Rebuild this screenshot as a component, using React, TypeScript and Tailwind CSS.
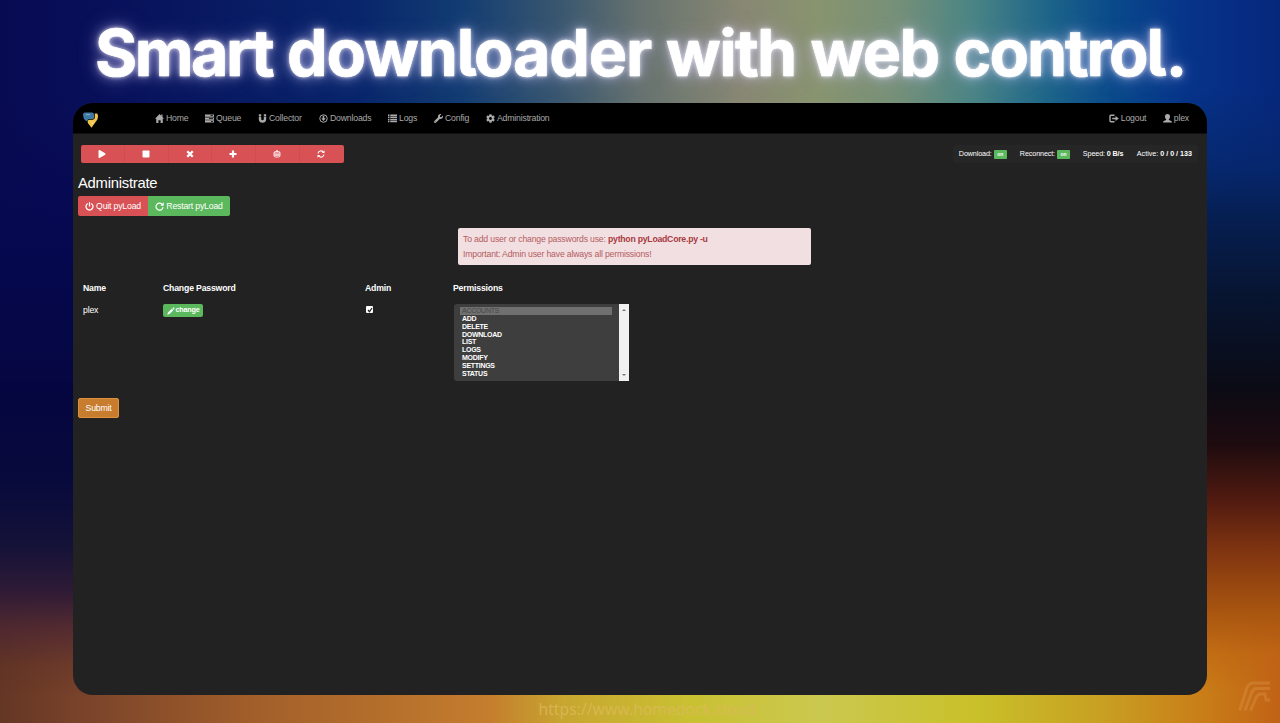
import React from "react";
import { FaWrench, FaCog, FaPlay, FaStop } from "react-icons/fa";

type Kids = { children?: React.ReactNode };

const Logo = () => (
  <svg width="15" height="16" viewBox="0 0 15 16">
    <path d="M0 2.500Q0 .600 2 .500h7q2 .100 2 2v3Q11 7 9.500 7H6Q4.500 7.300 4.300 9.500Q.500 8 .200 4z" fill="#3f7aa5" />
    <path d="M11.800 1.500H14q1 .500 1 3l-.600 3L8.500 15.700 4.800 11q-.600-3 1.700-3.200h3.200q2.100-.200 2.100-2.300z" fill="#f1c54b" />
    <path d="M3 2.600h4" stroke="#a9c2d3" strokeWidth=".700" />
    <circle cx="9.500" cy="11" r=".700" fill="#fff1c0" />
  </svg>
);
const HomeIcon = () => (
  <svg width="9" height="9" viewBox="0 0 18 18" fill="currentColor">
    <path d="M9 0l3.500 3.500V1H15v5l3 3.500h-2.500V18h-4.300v-5.500H6.800V18H2.500V9.500H0z" />
  </svg>
);
const QueueIcon = () => (
  <svg width="9" height="9" viewBox="0 0 18 18" fill="currentColor">
    <path fillRule="evenodd" d="M0 1h18v4.500H0zM11 2.500v1.500h5V2.500zM0 6.800h18v4.500H0zM8 8.300v1.500h8V8.300zM0 12.600h18V17H0zM12 14v1.500h4V14z" />
  </svg>
);
const MagnetIcon = () => (
  <svg width="9" height="9" viewBox="0 0 18 18" fill="none" stroke="currentColor" strokeWidth="4.800">
    <path d="M4 5.500V10a5 5 0 0 0 10 0V5.500M4 .500v4M14 .500v4" />
  </svg>
);
const ListIcon = () => (
  <svg width="9" height="9" viewBox="0 0 18 18" fill="currentColor">
    <path d="M0 1h3v3H0zM4.500 1H18v3H4.500zM0 5.200h3v3H0zM4.500 5.200H18v3H4.500zM0 9.400h3v3H0zM4.500 9.400H18v3H4.500zM0 13.600h3v3H0zM4.500 13.600H18v3H4.500z" />
  </svg>
);
const LogoutIcon = () => (
  <svg width="10" height="9" viewBox="0 0 20 18" fill="none" stroke="currentColor" strokeWidth="2.600">
    <path d="M11 2.500H4q-2 0-2 2v9q0 2 2 2h7M6.500 9h8" strokeWidth="2.800" /><path d="M13 4l6.500 5-6.500 5z" fill="currentColor" stroke="none" />
  </svg>
);
const UserIcon = () => (
  <svg width="9" height="9" viewBox="0 0 18 18" fill="currentColor">
    <path d="M9 0c3.500 0 5 2 5 5 0 2.500-1 4.500-2.300 5.700v1.500l4.800 2q1.500.700 1.500 2.800H0q0-2.100 1.500-2.800l4.800-2v-1.500C5 9.500 4 7.500 4 5c0-3 1.500-5 5-5z" />
  </svg>
);
const DownloadIcon = () => (
  <svg width="9" height="9" viewBox="0 0 18 18" fill="none" stroke="currentColor" strokeWidth="2">
    <circle cx="9" cy="9" r="7.500" /><path d="M9 3.500V10" strokeWidth="3" /><path d="M4.500 8.500L9 14l4.500-5.500z" fill="currentColor" stroke="none" />
  </svg>
);
const CrossIcon = () => (
  <svg width="8" height="8" viewBox="0 0 16 16" stroke="currentColor" strokeWidth="4.600"><path d="M2.500 2.500l11 11M13.500 2.500l-11 11" /></svg>
);
const PlusIcon = () => (
  <svg width="8" height="8" viewBox="0 0 16 16" stroke="currentColor" strokeWidth="4.400"><path d="M8 1v14M1 8h14" /></svg>
);
const TrashIcon = () => (
  <svg width="8" height="8" viewBox="0 0 16 16" fill="none" stroke="currentColor" strokeWidth="1.700">
    <rect x="2" y="3" width="12" height="11" rx="3" /><path d="M2 6h12M6 1.500h4M6 8v4M10 8v4M2 10h12" />
  </svg>
);
const RefreshIcon = () => (
  <svg width="8" height="8" viewBox="0 0 16 16" fill="none" stroke="currentColor" strokeWidth="2.300">
    <path d="M2 7a6 6 0 0 1 10.500-3M14 9A6 6 0 0 1 3.500 12" /><path d="M15 .500V6H9.500zM1 15.500V10h5.500z" fill="currentColor" stroke="none" />
  </svg>
);
const PowerIcon = () => (
  <svg width="9" height="9" viewBox="0 0 18 18" fill="none" stroke="currentColor" strokeWidth="2.600">
    <path d="M5.500 3a7 7 0 1 0 7 0M9 .500V9" />
  </svg>
);
const RepeatIcon = () => (
  <svg width="9" height="9" viewBox="0 0 16 16" fill="none" stroke="currentColor" strokeWidth="2.100">
    <path d="M12.500 4A6.200 6.200 0 1 0 14.200 9" /><path d="M15.500 .500V6.500H9.500z" fill="currentColor" stroke="none" />
  </svg>
);
const PencilIcon = () => (
  <svg width="8" height="8" viewBox="0 0 16 16" fill="currentColor">
    <path d="M.500 15.500l1.500-4.500L9.700 3.300 12.700 6.300 5 14zM10.700 2.300L12.500 .500l3 3-1.800 1.800z" />
  </svg>
);
const BrandMark = () => (
  <svg width="34" height="31" viewBox="0 0 34 31" fill="none" stroke="#e6a55c" strokeOpacity=".28" strokeWidth="3">
    <path d="M1.500 29.500L9 7q2-5 6-5h17M7 29.500L13.500 12q1.500-4.500 5-4.500H32M12.500 29.500L18 17q1.500-4 5-4h4l1 6h4" />
  </svg>
);

const NavItem = ({ children, className = "" }: Kids & { className?: string }) => (
  <a className={`flex items-center gap-0.5 whitespace-nowrap ${className}`}>{children}</a>
);
const ToolButton = ({ children }: Kids) => (
  <button className="flex h-full flex-1 items-center justify-center border-r border-[#cf4c4f] pr-[1px] text-[8px] last:border-r-0 last:pr-[2px]">{children}</button>
);
const On = () => (
  <span className="ml-[2px] flex h-[9px] w-[13px] items-center justify-center rounded-[1px] bg-[#5cb85c] text-[5px] font-bold text-white">on</span>
);

const permissions = ["ACCOUNTS", "ADD", "DELETE", "DOWNLOAD", "LIST", "LOGS", "MODIFY", "SETTINGS", "STATUS"];

export default function App() {
  return (
    <div className="flex h-[723px] w-[1280px] flex-col overflow-hidden font-['Liberation_Sans',sans-serif] [background:linear-gradient(180deg,#06084d00_0,#07095099_12%,#060850_24%,#05063f_50%,#080a3c_62%,#151238_72%,#2e1a36_79%,#4a2532cc_85%,#5d302866_91%,#5d302800_96%)_0_90px/100px_633px_no-repeat,linear-gradient(180deg,#052a7000_0,#06266acc_12%,#061f52_20%,#07142f_33%,#0b0b15_47%,#1e0b0f_56%,#521b10_65%,#813510_73%,#a75410_82%,#bd641299_89%,#c56e1600_95%)_1180px_90px/100px_633px_no-repeat,linear-gradient(90deg,#070b52_0,#08105a_8%,#08256b_28%,#123c72_36%,#3b586f_44%,#66726f_50%,#888873_58%,#88946f_64%,#769078_70%,#4a8485_76%,#1c6489_82%,#09498a_87%,#063389_93%,#06277c_100%)_0_0/1280px_250px_no-repeat,linear-gradient(90deg,#643624_0,#78422a_6%,#a25f2a_20%,#c47c2d_38%,#c8a630_44%,#c9c132_54%,#cbc84f_64%,#c9c12a_76%,#c8a022_86%,#c97d17_94%,#c16216_100%)_0_500px/1280px_223px_no-repeat]">
      <h1 className="flex h-[103px] shrink-0 items-center justify-center gap-[15px] pt-[3px] whitespace-nowrap font-['Inter',sans-serif] text-[64.500px] leading-none font-bold tracking-[-1.680px] text-white [-webkit-text-stroke:0.700px_#fff] [font-feature-settings:'cv05'] [text-shadow:0_0_4px_#ffffffcc,0_0_12px_#d9ceff99,0_0_22px_#c9c2ff66]">
        <span className="tracking-[-2.500px]">Smart </span>
        <span className="tracking-[-1.200px]">downloader </span>
        <span>with </span>
        <span>web </span>
        <span className="tracking-[-2.100px]">control.</span>
      </h1>
      <main className="mx-[73px] flex h-[592px] w-[1134px] shrink-0 flex-col overflow-hidden rounded-[20px] bg-[#222] text-[8.700px] tracking-[-0.180px] text-white">
        <header className="flex h-[31px] shrink-0 items-center border-b border-[#111] bg-black pr-[18px] pl-[10px] text-[#aaa]">
          <div className="w-[72px] pt-1"><Logo /></div>
          <nav className="flex flex-1 pt-[1px]">
            <NavItem className="w-[50px]"><HomeIcon />Home</NavItem>
            <NavItem className="w-[53px]"><QueueIcon />Queue</NavItem>
            <NavItem className="w-[61px]"><MagnetIcon />Collector</NavItem>
            <NavItem className="w-[69px]"><DownloadIcon />Downloads</NavItem>
            <NavItem className="w-[46px]"><ListIcon />Logs</NavItem>
            <NavItem className="w-[52px]"><FaWrench size={9} />Config</NavItem>
            <NavItem><FaCog size={9} />Administration</NavItem>
          </nav>
          <NavItem className="w-[54px] pt-[1px]"><LogoutIcon />Logout</NavItem>
          <NavItem className="pt-[1px]"><UserIcon />plex</NavItem>
        </header>
        <div className="mt-[11px] flex shrink-0 items-center justify-between pr-[9px] pl-[8px]">
          <div className="flex h-[18px] w-[263px] overflow-hidden rounded-[2px] bg-[#d75155]">
            <ToolButton><FaPlay /></ToolButton>
            <ToolButton><FaStop /></ToolButton>
            <ToolButton><CrossIcon /></ToolButton>
            <ToolButton><PlusIcon /></ToolButton>
            <ToolButton><TrashIcon /></ToolButton>
            <ToolButton><RefreshIcon /></ToolButton>
          </div>
          <div className="flex h-[18px] items-center rounded-[3px] bg-[#262626] pt-[1px] pr-[6px] pl-[6px] text-[7.200px] tracking-[-0.120px] whitespace-nowrap">
            <span className="flex w-[61px] items-center">Download: <On /></span>
            <span className="flex w-[63px] items-center">Reconnect: <On /></span>
            <span className="w-[54px]">Speed: <b>0 B/s</b></span>
            <span className="tracking-[-0.020px]">Active: <b>0 / 0 / 133</b></span>
          </div>
        </div>
        <h2 className="mt-[11px] pl-[5px] text-[14.800px] leading-[19px] tracking-[-0.250px]">Administrate</h2>
        <div className="mt-[3px] flex h-[20px] shrink-0 pl-[5px]">
          <button className="flex w-[70px] items-center justify-center gap-0.5 rounded-l-[2px] bg-[#d75155] pt-[1px]"><PowerIcon />Quit pyLoad</button>
          <button className="flex w-[82px] items-center justify-center gap-0.5 rounded-r-[2px] bg-[#5cb85c] pt-[1px]"><RepeatIcon />Restart pyLoad</button>
        </div>
        <div className="mt-[12px] ml-[385px] h-[37px] w-[353px] shrink-0 rounded-[2px] bg-[#f2dfe2] pt-[4px] pl-[5px] leading-[15px] text-[#b45d60]">
          <p>To add user or change passwords use: <b className="tracking-[-0.240px] text-[#a73a3e]">python pyLoadCore.py -u</b></p>
          <p>Important: Admin user have always all permissions!</p>
        </div>
        <section className="mt-[17px] grid shrink-0 grid-cols-[80px_202px_88px_176px] grid-rows-[22px_77px] pl-[10px]">
          <b>Name</b><b>Change Password</b><b>Admin</b><b>Permissions</b>
          <span>plex</span>
          <button className="flex h-[13px] w-[40px] items-center justify-center gap-px rounded-[2px] bg-[#5cb85c] text-[7.200px] font-bold tracking-[-0.200px]"><PencilIcon />change</button>
          <span className="mt-[2px] ml-[1px] flex size-[7px] items-center justify-center rounded-[1px] bg-white"><svg width="6" height="6" viewBox="0 0 6 6"><path d="M1 3l1.500 1.700L5 1" fill="none" stroke="#222" strokeWidth="1.200" /></svg></span>
          <div className="ml-[1px] flex h-[77px] w-[175px] rounded-l-[3px] bg-[#3e3e3e]">
            <ul className="ml-[6px] w-[152px] pt-[3px] text-[7px] leading-[7.840px] font-bold tracking-[-0.280px]">
              {permissions.map((p, i) => <li key={p} className={i === 0 ? "bg-[#707070] pl-[2px] font-normal text-[#484848]" : "pl-[2px]"}>{p}</li>)}
            </ul>
            <div className="ml-auto flex w-[10px] flex-col items-center justify-between bg-[#f1f1f1] py-1">
              <svg width="4" height="3" viewBox="0 0 4 3"><path d="M0 3l2-2 2 2" fill="#777" /></svg>
              <svg width="4" height="3" viewBox="0 0 4 3"><path d="M0 0l2 2 2-2" fill="#777" /></svg>
            </div>
          </div>
        </section>
        <button className="mt-[17px] ml-[5px] h-[20px] w-[41px] shrink-0 rounded-[2px] border border-[#dc9340] bg-[#c77c2e] pt-[1px]">Submit</button>
      </main>
      <footer className="relative flex h-[28px] shrink-0 items-center justify-center pt-[2px] pl-[14px] font-['Noto_Sans',sans-serif] text-[15.700px] leading-none text-[#dcb95acc]">
        https://www.homedock.cloud
        <div className="absolute right-[8px] bottom-[11px]"><BrandMark /></div>
      </footer>
    </div>
  );
}
